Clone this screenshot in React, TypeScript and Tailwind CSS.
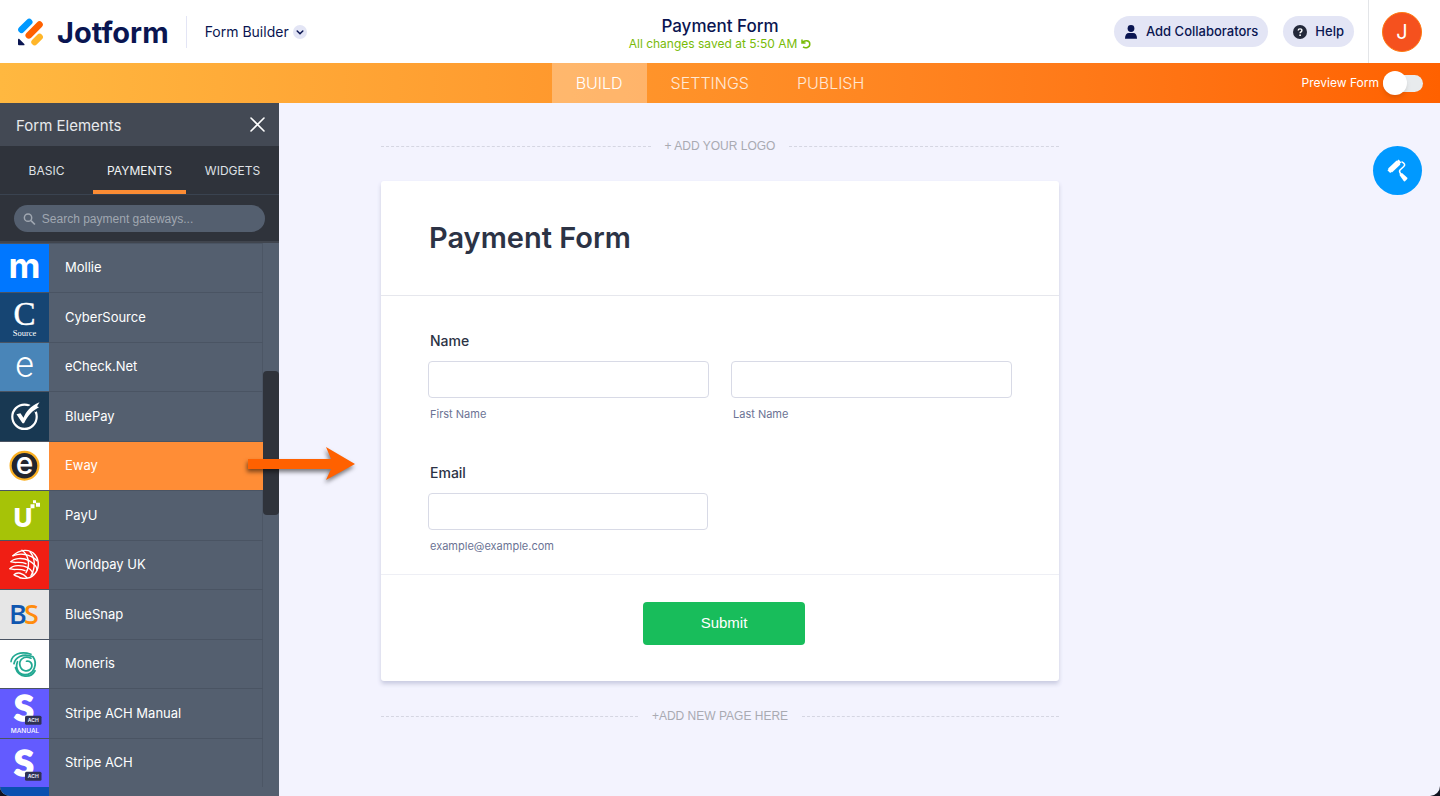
import { useState } from 'react';
import type { ReactNode } from 'react';

function Tile({ bg, children }: { bg: string; children?: ReactNode }) {
  return (
    <svg
      viewBox="0 0 49 49"
      preserveAspectRatio="xMidYMid slice"
      className={`h-full w-[49px] shrink-0 ${bg}`}
      aria-hidden="true"
    >
      {children}
    </svg>
  );
}

function StripeMark({ manual = false }: { manual?: boolean }) {
  return (
    <Tile bg="bg-[#635bff]">
      <text
        x="24"
        y={manual ? 32 : 37}
        textAnchor="middle"
        fontFamily="Lato, sans-serif"
        fontWeight="900"
        fontSize="36"
        fill="#fff"
        stroke="#fff"
        strokeWidth="1.500"
      >
        S
      </text>
      <rect x="25" y={manual ? 27 : 33} width="16.500" height="9" rx="1.500" fill="#2f3154" />
      <text
        x="33.200"
        y={manual ? 33.500 : 39.500}
        textAnchor="middle"
        fontFamily="Inter, sans-serif"
        fontWeight="700"
        fontSize="5"
        fill="#e6e6f5"
      >
        ACH
      </text>
      {manual && (
        <text
          x="25"
          y="44"
          textAnchor="middle"
          fontFamily="Inter, sans-serif"
          fontWeight="500"
          fontSize="6.500"
          fill="#fff"
        >
          MANUAL
        </text>
      )}
    </Tile>
  );
}

const gateways = [
  {
    label: 'Mollie',
    icon: (
      <Tile bg="bg-[#0077ff]">
        <text
          x="24.500"
          y="34"
          textAnchor="middle"
          fontFamily="Inter, sans-serif"
          fontWeight="700"
          fontSize="35"
          fill="#fff"
        >
          m
        </text>
      </Tile>
    ),
  },
  {
    label: 'CyberSource',
    icon: (
      <Tile bg="bg-[#164573]">
        <g textAnchor="middle" fontFamily="'Liberation Serif', serif" fill="#fff">
          <text x="24.500" y="32" fontSize="33" stroke="#fff" strokeWidth="0.400">
            C
          </text>
          <text x="24.500" y="43" fontSize="8.500">
            Source
          </text>
        </g>
      </Tile>
    ),
  },
  {
    label: 'eCheck.Net',
    icon: (
      <Tile bg="bg-[#4985b8]">
        <text
          x="24.500"
          y="34"
          textAnchor="middle"
          fontFamily="Roboto, sans-serif"
          fontWeight="300"
          fontSize="36"
          fill="#fff"
        >
          e
        </text>
      </Tile>
    ),
  },
  {
    label: 'BluePay',
    icon: (
      <Tile bg="bg-[#183852]">
        <circle cx="24.500" cy="25" r="12.200" fill="none" stroke="#fff" strokeWidth="2.200" />
        <path d="M28 17 L39 11 L35 18 Z" fill="#183852" stroke="#183852" strokeWidth="4" />
        <path
          d="M16.500 22.500 L20.500 21.500 L23.500 26 C26 20 30 14.500 39.500 10.500 L37 14.500 L39 15.500 C32 19 28 24 24 31.500 L22.500 31.500 Z"
          fill="#fff"
        />
      </Tile>
    ),
  },
  {
    label: 'Eway',
    icon: (
      <Tile bg="bg-white">
        <circle cx="24.500" cy="24" r="13.900" fill="#23262f" stroke="#fbb022" strokeWidth="2.200" />
        <text
          x="24.500"
          y="32"
          textAnchor="middle"
          fontFamily="Inter, sans-serif"
          fontWeight="500"
          fontSize="30"
          fill="#fff"
        >
          e
        </text>
      </Tile>
    ),
  },
  {
    label: 'PayU',
    icon: (
      <Tile bg="bg-[#a6c307]">
        <text
          x="23"
          y="36"
          textAnchor="middle"
          fontFamily="Inter, sans-serif"
          fontWeight="800"
          fontSize="26"
          fill="#fff"
        >
          U
        </text>
        <path d="M30.500 13.500h4v4h-4z M33 9.500h3v3h-3z M36 12h4v4h-4z" fill="#fff" />
      </Tile>
    ),
  },
  {
    label: 'Worldpay UK',
    icon: (
      <Tile bg="bg-[#f01e14]">
        <g fill="none" stroke="#fff" strokeWidth="1.400" strokeLinecap="round">
          <path d="M13 15 C20 8 30 8 35 14 C40 20 39 29 34 34 C30 38 24 38 20 37" />
          <path d="M13 15 C20 12 30 13 37 20" />
          <path d="M11 21 C13 18 22 16 29 20 C34 23 37 26 37 29" />
          <path d="M11 21 C15 23 20 20 26 23" />
          <path d="M10 28 C13 24 22 24 28 27 C31 29 33 32 33 34" />
          <path d="M10 28 C14 30 19 27 25 30" />
          <path d="M14 34 C17 31 23 32 27 37 M14 34 C16 36 18 35 20 37" />
          <path d="M22 9.500 C28 14 31 23 26 32" />
          <path d="M30 11 C35 17 36 26 31 35" />
        </g>
      </Tile>
    ),
  },
  {
    label: 'BlueSnap',
    icon: (
      <Tile bg="bg-[#e6e6e6]">
        <g fontFamily="'Open Sans', sans-serif" fontWeight="600" fontSize="27">
          <text x="9" y="34" fill="#1057b0">
            B
          </text>
          <text x="24" y="34" fill="#ff8c0d">
            S
          </text>
        </g>
      </Tile>
    ),
  },
  {
    label: 'Moneris',
    icon: (
      <Tile bg="bg-white">
        <g fill="none" stroke="#22a892" strokeLinecap="round">
          <path d="M11 22 C12 15 20 11 31 14.500" strokeWidth="1.600" />
          <path d="M14 24 C15 18 22 13 33 17 C38 24 34 35 25 35 C18 35 15 28 17.500 22" strokeWidth="1.800" />
          <path d="M35 31 C31 38.500 19 39 15.500 28" strokeWidth="1.800" />
          <path d="M31 18.500 C24 15.500 18.500 20 20 26 C21.500 32 29 33 31.500 28 C33 24 30 20.500 26.500 21.500" strokeWidth="1.700" />
        </g>
      </Tile>
    ),
  },
  { label: 'Stripe ACH Manual', icon: <StripeMark manual /> },
  { label: 'Stripe ACH', icon: <StripeMark /> },
];

const sidebarTabs = ['BASIC', 'PAYMENTS', 'WIDGETS'];
const navTabs = ['BUILD', 'SETTINGS', 'PUBLISH'];

function Header() {
  return (
    <header className="grid h-[63px] shrink-0 grid-cols-[1fr_auto_1fr] items-center bg-white text-[#0a1551]">
      <div className="flex items-center pl-[17px]">
        <a href="#" className="flex items-center gap-[13px]" aria-label="Jotform">
          <svg viewBox="0 0 27 29" className="h-[29px] w-[27px]" aria-hidden="true">
            <g strokeWidth="6.600" strokeLinecap="round">
              <path d="M4.500 12.700 L12.200 5" stroke="#0099ff" />
              <path d="M11.800 18.300 L22.500 7.600" stroke="#ff6100" />
              <path d="M17.600 25 L22.600 20" stroke="#ffb629" />
            </g>
            <path d="M1 22.500 C1 21.700 1.700 21.500 2.300 22 L7.300 27 C7.800 27.600 7.500 28.300 6.800 28.300 L2 28.300 Q1 28.300 1 27.300 Z" fill="#0a1551" />
          </svg>
          <span className="pt-0.5 text-[29px] leading-8 font-bold">Jotform</span>
        </a>
        <button className="ml-[17px] flex h-8 items-center gap-1 border-l border-[#e3e5f5] pl-[18px] text-sm">
          Form Builder
          <svg viewBox="0 0 14 14" className="size-3.5" aria-hidden="true">
            <circle cx="7" cy="7" r="7" fill="#e3e5f5" />
            <path d="M4.200 6 L7 8.700 L9.800 6" fill="none" stroke="#0a1551" strokeWidth="1.500" strokeLinecap="round" />
          </svg>
        </button>
      </div>
      <div className="flex flex-col items-center pt-1">
        <div className="text-[17px] leading-5 font-medium">Payment Form</div>
        <div className="flex items-center gap-1 text-xs leading-4 text-[#78bb07]">
          All changes saved at 5:50 AM
          <svg viewBox="0 0 10 10" className="size-2.5" aria-hidden="true">
            <path d="M1 0.500 V4 H4.500 M1.200 3.800 C3 1 8.800 0.600 8.800 5 C8.800 8.800 4.500 9.700 2 7.900" fill="none" stroke="#78bb07" strokeWidth="1.500" />
          </svg>
        </div>
      </div>
      <div className="flex h-full items-center justify-end">
        <button className="flex h-[31px] items-center gap-2 rounded-full bg-[#e3e5f5] px-2.5 text-[13px] font-medium">
          <svg viewBox="0 0 14 14" className="size-3.5" aria-hidden="true">
            <circle cx="7" cy="3.500" r="3.400" fill="#0a1551" />
            <path d="M1 13.800 Q1 8 5 8 H9 Q13 8 13 13.800 Z" fill="#0a1551" />
          </svg>
          Add Collaborators
        </button>
        <button className="ml-[15px] flex h-[31px] items-center gap-2 rounded-full bg-[#e3e5f5] px-2.5 text-[13px] font-medium">
          <svg viewBox="0 0 14 14" className="size-3.5" aria-hidden="true">
            <circle cx="7" cy="7" r="7" fill="#23283a" />
            <path d="M5.200 5.600 Q5.200 3.900 7 3.900 Q8.900 3.900 8.900 5.500 Q8.900 6.500 7.900 7 Q7.100 7.400 7.100 8.300" fill="none" stroke="#fff" strokeWidth="1.400" />
            <circle cx="7.100" cy="10.200" r="0.900" fill="#fff" />
          </svg>
          Help
        </button>
        <div className="ml-3.5 flex h-full items-center border-l border-[#e3e5e8] pr-[18px] pl-[13px]">
          <button className="size-10 rounded-full border border-[#ff7a10] bg-[#f5511e] text-xl text-white">
            J
          </button>
        </div>
      </div>
    </header>
  );
}

function NavBar() {
  return (
    <nav className="grid h-10 shrink-0 grid-cols-[1fr_auto_1fr] bg-linear-to-r from-[#ffb840] to-[#ff6100] text-white">
      <div />
      <div className="flex">
        {navTabs.map((tab) => (
          <button
            key={tab}
            className={
              tab === 'BUILD'
                ? 'bg-white/30 px-6 text-base font-light'
                : 'px-6 text-base font-light text-white/80'
            }
          >
            {tab}
          </button>
        ))}
      </div>
      <label className="flex items-center justify-end gap-1 pr-[17px] text-xs">
        Preview Form
        <input type="checkbox" role="switch" className="sr-only" />
        <span className="flex h-[17px] w-10 items-center rounded-full bg-[#e8ebed]">
          <span className="size-6 rounded-full bg-white shadow-md" />
        </span>
      </label>
    </nav>
  );
}

function Sidebar() {
  const [search, setSearch] = useState('');

  return (
    <aside className="flex w-[279px] shrink-0 flex-col bg-[#545f6f] text-white">
      <div className="flex h-[43px] shrink-0 items-center justify-between bg-[#434954] pr-3.5 pl-4">
        <h2 className="pt-1 text-[15px] text-[#e8eaed]">Form Elements</h2>
        <button aria-label="Close">
          <svg viewBox="0 0 15 15" className="size-[15px]" aria-hidden="true">
            <path d="M1 1 L14 14 M14 1 L1 14" stroke="#fff" strokeWidth="1.600" strokeLinecap="round" />
          </svg>
        </button>
      </div>
      <div className="grid h-[49px] shrink-0 grid-cols-3 border-b border-[#3a4350] bg-[#2f333b]">
        {sidebarTabs.map((tab) => (
          <button
            key={tab}
            className={
              tab === 'PAYMENTS'
                ? 'border-b-4 border-[#fc8c34] pt-1.5 text-xs text-[#f2f3f5]'
                : 'pt-0.5 text-xs text-[#dfe1e5]'
            }
          >
            {tab}
          </button>
        ))}
      </div>
      <div className="h-12 shrink-0 border-b-2 border-[#40454e] bg-[#2f333b] px-3.5 pt-2.5">
        <label className="flex h-[27px] items-center gap-1.5 rounded-full bg-[#545f6f] pr-4 pl-[9px]">
          <svg viewBox="0 0 14 14" className="size-3.5" aria-hidden="true">
            <circle cx="5.500" cy="5.500" r="4" fill="none" stroke="#a0a7b1" strokeWidth="1.600" />
            <path d="M8.700 8.700 L13 13" stroke="#a0a7b1" strokeWidth="1.800" />
          </svg>
          <input
            type="text"
            aria-label="Search payment gateways"
            placeholder="Search payment gateways..."
            value={search}
            onChange={(e) => setSearch(e.target.value)}
            className="w-full bg-transparent font-['Liberation_Sans',sans-serif] text-xs outline-none placeholder:text-[#a0a7b1]"
          />
        </label>
      </div>
      <div className="flex min-h-0 flex-1 overflow-hidden">
        <div className="min-w-0 flex-1">
          <ul className="grid h-[544px] auto-rows-fr">
            {gateways.map(({ label, icon }) => (
              <li key={label} className="flex min-h-0 border-t border-[#4a5463]">
                {icon}
                <button
                  className={
                    label === 'Eway'
                      ? 'flex-1 bg-[#ff8d36] pl-4 text-left text-[13px]'
                      : 'flex-1 border-r border-[#4c5665] pl-4 text-left text-[13px]'
                  }
                >
                  {label}
                </button>
              </li>
            ))}
          </ul>
          <Tile bg="bg-[#0a50b0]" />
        </div>
        <div className="w-4 pt-32">
          <div className="h-36 rounded bg-[#2f333b]" />
        </div>
      </div>
    </aside>
  );
}

function DashedAction({ children }: { children: ReactNode }) {
  return (
    <div className="flex items-center gap-3.5">
      <span className="flex-1 border-t border-dashed border-[#d5d6e2]" />
      <button className="font-['Liberation_Sans',sans-serif] text-xs leading-4 text-[#a9aab2]">
        {children}
      </button>
      <span className="flex-1 border-t border-dashed border-[#d5d6e2]" />
    </div>
  );
}

function Field({ id, type = 'text', hint }: { id: string; type?: string; hint: string }) {
  return (
    <div>
      <input
        id={id}
        type={type}
        aria-describedby={`${id}-hint`}
        className="block h-[37px] w-full rounded border border-[#d8dae6] px-2.5 text-sm"
      />
      <label id={`${id}-hint`} htmlFor={id} className="mt-2 block pl-0.5 text-[11px] leading-4 text-[#6b7394]">
        {hint}
      </label>
    </div>
  );
}

function PaymentForm() {
  return (
    <form
      onSubmit={(e) => e.preventDefault()}
      className="my-[27px] rounded-[3px] bg-white text-[#2c3345] shadow-[0_3px_4px_#c9cbe0]"
    >
      <div className="border-b border-[#e6e7ed] px-12 py-9">
        <h1 className="text-[29px] leading-[42px] font-semibold">Payment Form</h1>
      </div>
      <div className="px-[47px] pt-[33px] pb-5">
        <fieldset>
          <legend className="pl-0.5 text-sm leading-6 font-medium">Name</legend>
          <div className="mt-2 grid grid-cols-2 gap-[22px]">
            <Field id="first-name" hint="First Name" />
            <Field id="last-name" hint="Last Name" />
          </div>
        </fieldset>
        <div className="mt-[39px]">
          <label htmlFor="email" className="block pl-0.5 text-sm leading-6 font-medium">
            Email
          </label>
          <div className="mt-2 w-[280px]">
            <Field id="email" type="email" hint="example@example.com" />
          </div>
        </div>
      </div>
      <div className="flex justify-center border-t border-[#eeeff5] pt-[27px] pb-9 pl-2">
        <button
          type="submit"
          className="h-[43px] w-[162px] rounded bg-[#18bd5b] font-['Liberation_Sans',sans-serif] text-[15px] text-white"
        >
          Submit
        </button>
      </div>
    </form>
  );
}

function App() {
  return (
    <div className="h-screen bg-[#10131f] font-[Inter,sans-serif]">
      <div className="relative flex h-full flex-col overflow-hidden rounded-b-[10px] bg-[#f3f3fe]">
        <Header />
        <NavBar />
        <div className="relative flex min-h-0 flex-1">
          <Sidebar />
          <main className="min-w-0 flex-1 pt-[35px] pr-[279px]">
            <div className="mx-auto max-w-[678px]">
              <DashedAction>+ ADD YOUR LOGO</DashedAction>
              <PaymentForm />
              <DashedAction>+ADD NEW PAGE HERE</DashedAction>
            </div>
          </main>
          <button
            aria-label="Form designer"
            className="absolute top-[43px] right-[18px] flex size-[49px] items-center justify-center rounded-full bg-[#0099ff]"
          >
            <svg viewBox="0 0 24 24" className="size-6" aria-hidden="true">
              <path d="M4 11.500 L12.500 3.500" stroke="#fff" strokeWidth="5.500" />
              <path d="M2.800 12.600 L4.500 11 M12 3.800 L14 2" stroke="#fff" strokeWidth="4" />
              <path
                d="M15.500 2.600 C19 4.500 19.500 5.800 17.500 7.800 L14 11 C12.600 12.400 13.600 13.400 15.500 15.800"
                fill="none"
                stroke="#fff"
                strokeWidth="1.500"
              />
              <path d="M13.300 15.700 L16 13.900 L21.300 18.700 Q21.700 19.300 21.200 19.900 L19 22.200 Q18.300 22.700 17.700 22 Z" fill="#fff" />
            </svg>
          </button>
          {/* drag hint from the gateway list into the form */}
          <svg
            viewBox="0 0 114 44"
            className="pointer-events-none absolute top-[340px] left-[244px] h-[44px] w-[114px] drop-shadow-[-1px_3px_2px_rgba(0,0,0,0.5)]"
            aria-hidden="true"
          >
            <path d="M4 16 H87 L82 4 L111 21 L82 37 L87 26 H4 Z" fill="#ff6100" />
          </svg>
        </div>
      </div>
    </div>
  );
}

export default App;
